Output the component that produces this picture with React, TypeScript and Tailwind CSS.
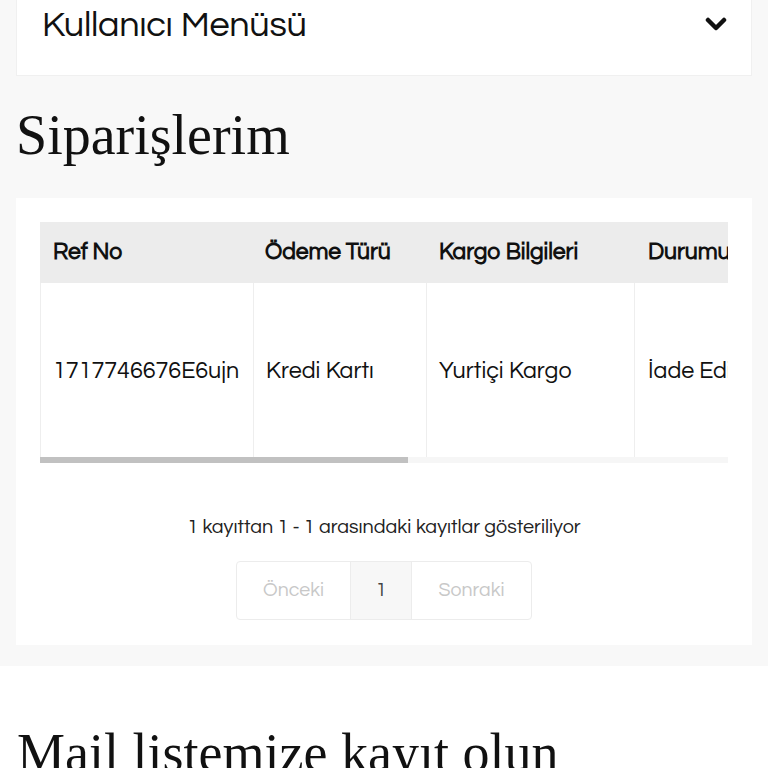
import React from "react";

const sans = { fontFamily: "Questrial, 'Open Sans', 'Noto Sans', sans-serif" } as React.CSSProperties;

export default function App() {
  return (
    <div className="min-h-screen bg-white" style={sans}>
      <div className="bg-[#f8f8f8] px-4 pb-[21px]">
        <div className="bg-white border border-[#f0f0f0] border-t-0 h-[76px] flex items-start justify-between pl-[25px] pr-[24px]">
          <span className="text-[36px] leading-[50px] text-[#111] tracking-[-0.3px]">Kullanıcı Menüsü</span>
          <svg className="mt-[16px]" width="22" height="16" viewBox="0 0 22 16">
            <path d="M3 4 L11 12 L19 4" fill="none" stroke="#111" strokeWidth="4.5" strokeLinecap="round" strokeLinejoin="round" />
          </svg>
        </div>
        <h1 className="mt-[26px] mb-[30px] text-[56px] leading-[66px] text-[#111]" style={{ fontFamily: "'Liberation Serif', serif" }}>
          Siparişlerim
        </h1>
        <div className="bg-white p-6">
          <div className="relative overflow-hidden">
            <div className="flex flex-col w-[900px]">
              <div className="flex h-[61px] bg-[#ececec] items-center text-[23px] font-bold text-[#111] tracking-[-0.1px]">
                <div className="w-[213px] pl-[13px]">Ref No</div>
                <div className="w-[173px] pl-[12px]">Ödeme Türü</div>
                <div className="w-[208px] pl-[13px]">Kargo Bilgileri</div>
                <div className="w-[200px] pl-[14px]">Durumu</div>
              </div>
              <div className="flex h-[180px] text-[23.3px] text-[#111]">
                <div className="w-[213px] pl-[12px] border-l border-[#eee] flex items-center pb-[4px]">1717746676E6ujn</div>
                <div className="w-[173px] pl-[12px] border-l border-[#eee] flex items-center pb-[4px]">Kredi Kartı</div>
                <div className="w-[208px] pl-[12px] border-l border-[#eee] flex items-center pb-[4px]">Yurtiçi Kargo</div>
                <div className="w-[200px] pl-[13px] border-l border-[#eee] flex items-center pb-[4px]">İade Edildi</div>
              </div>
            </div>
            <div className="absolute left-0 right-0 bottom-0 h-[6px] bg-[#f6f6f6]">
              <div className="h-full w-[368px] bg-[#c1c1c1]" />
            </div>
          </div>
          <p className="mt-[50px] text-center text-[19.8px] text-[#222] leading-[28px]">
            1 kayıttan 1 - 1 arasındaki kayıtlar gösteriliyor
          </p>
          <div className="mt-[20px] mb-[1px] flex justify-center">
            <div className="flex h-[59px] border border-[#ececec] rounded-[4px] overflow-hidden text-[19.5px]">
              <div className="w-[113px] flex items-center justify-center text-[#c8c8c8]">Önceki</div>
              <div className="w-[62px] flex items-center justify-center bg-[#f7f7f7] text-[#444] border-x border-[#ececec]">1</div>
              <div className="w-[119px] flex items-center justify-center text-[#c8c8c8]">Sonraki</div>
            </div>
          </div>
        </div>
      </div>
      <div className="px-[17px] pt-[54px]">
        <h2 className="text-[54px] leading-[66px] text-[#111]" style={{ fontFamily: "'Liberation Serif', serif" }}>
          Mail listemize kayıt olun
        </h2>
      </div>
    </div>
  );
}
